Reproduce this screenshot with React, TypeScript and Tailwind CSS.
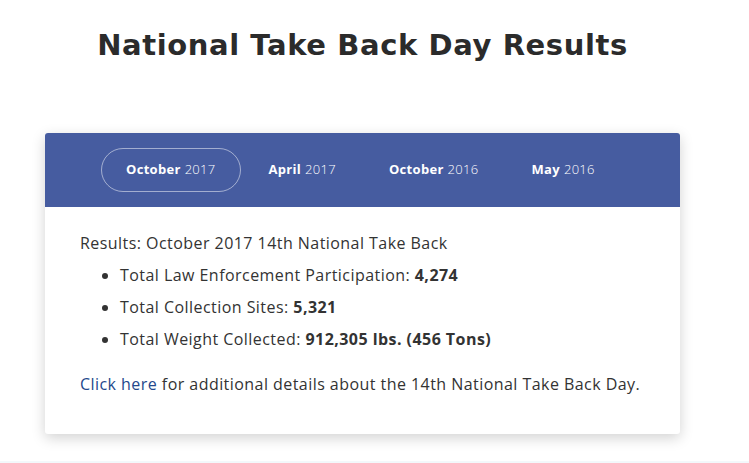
export default function App() {
    const tabs = [
        { month: "October", year: "2017", active: true },
        { month: "April", year: "2017", active: false },
        { month: "October", year: "2016", active: false },
        { month: "May", year: "2016", active: false },
    ];

    return (
        <div className="relative min-h-[463px] bg-white font-['Open_Sans',sans-serif] text-[#333]">
            {/* TITLE */}
            <div className="ml-[45px] w-[635px] pt-[25px] text-center">
                <h1 className="font-['DejaVu_Sans',sans-serif] text-[29px] font-bold leading-[40px] tracking-[0.6px] text-[#2b2b2b]">
                    National Take Back Day Results
                </h1>
            </div>

            {/* CARD */}
            <section className="mt-[68px] ml-[45px] w-[635px] overflow-hidden rounded-[3px] bg-white shadow-[0_4px_14px_rgba(0,0,0,0.18)]">
                <div className="flex h-[74px] items-center gap-[3px] bg-[#465ca0] pl-[56px]">
                    {tabs.map((t, i) => (
                        <button
                            key={i}
                            className={`flex h-[44px] items-center rounded-full px-6 text-[13px] tracking-[0.3px] text-white ${
                                t.active ? "border border-white/50" : "border border-transparent"
                            }`}
                        >
                            <span className="font-bold">{t.month}</span>
                            <span className="ml-1 font-light">{t.year}</span>
                        </button>
                    ))}
                </div>

                <div className="px-[35px] pt-[24px] pb-[38px] text-[16px] leading-[24px] tracking-[0.45px]">
                    <p>Results: October 2017 14th National Take Back</p>
                    <ul className="mt-[8px] list-disc space-y-[8px] pl-[40px]">
                        <li>
                            Total Law Enforcement Participation: <strong>4,274</strong>
                        </li>
                        <li>
                            Total Collection Sites: <strong>5,321</strong>
                        </li>
                        <li>
                            Total Weight Collected: <strong>912,305 lbs. (456 Tons)</strong>
                        </li>
                    </ul>
                    <p className="mt-[21px]">
                        <a href="#" className="text-[#24488c]">Click here</a> for additional details about the 14th National Take Back Day.
                    </p>
                </div>
            </section>

            <div className="absolute bottom-0 left-0 h-[2px] w-full bg-[#f3f8fb]" />
        </div>
    );
}
